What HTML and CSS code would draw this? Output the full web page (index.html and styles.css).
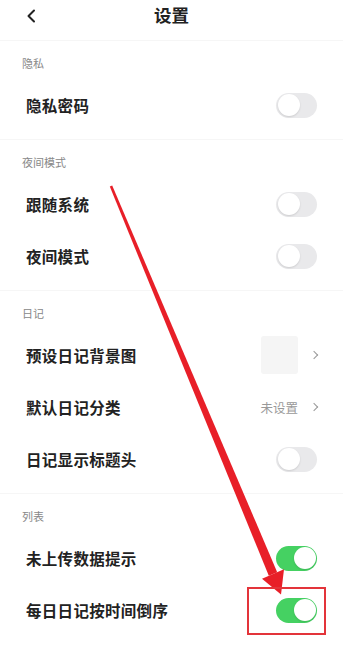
FILE: index.html
```html
<!DOCTYPE html>
<html lang="zh">
<head>
<meta charset="utf-8">
<link rel="stylesheet" href="styles.css">
</head>
<body>
<div class="page">
  <header class="header">
    <svg class="back" width="10" height="14" viewBox="0 0 10 14"><path d="M8 1.5 L2.5 7 L8 12.5" fill="none" stroke="#222" stroke-width="2" stroke-linecap="round" stroke-linejoin="round"/></svg>
    <h1 class="title">设置</h1>
  </header>

  <section class="section">
    <div class="label">隐私</div>
    <div class="row"><span class="name">隐私密码</span><span class="toggle"></span></div>
  </section>

  <section class="section">
    <div class="label">夜间模式</div>
    <div class="row"><span class="name">跟随系统</span><span class="toggle"></span></div>
    <div class="row"><span class="name">夜间模式</span><span class="toggle"></span></div>
  </section>

  <section class="section">
    <div class="label">日记</div>
    <div class="row"><span class="name">预设日记背景图</span><span class="value"><span class="thumb"></span><span class="chev"></span></span></div>
    <div class="row"><span class="name">默认日记分类</span><span class="value"><span class="muted">未设置</span><span class="chev"></span></span></div>
    <div class="row"><span class="name">日记显示标题头</span><span class="toggle"></span></div>
  </section>

  <section class="section">
    <div class="label">列表</div>
    <div class="row"><span class="name">未上传数据提示</span><span class="toggle on"></span></div>
    <div class="row"><span class="name">每日日记按时间倒序</span><span class="toggle on"></span></div>
  </section>

  <svg class="annot" width="343" height="647" viewBox="0 0 343 647">
    <polygon points="112.2,185.5 277.2,572.2 268.8,575.8 109.8,186.5" fill="#e81f28"/>
    <polygon points="284,569.3 281,594.5 262,578.7" fill="#e81f28"/>
    <rect x="248" y="588" width="77" height="46" fill="none" stroke="#e3343a" stroke-width="2"/>
  </svg>
</div>
</body>
</html>
```

FILE: styles.css
```css
* { box-sizing: border-box; }
html, body { margin: 0; padding: 0; background: #fff; }
body {
  font-family: "Noto Sans CJK SC", "Noto Sans", sans-serif;
  color: #222;
}
.page {
  position: relative;
  width: 343px;
  height: 647px;
  overflow: hidden;
}
.header {
  height: 40px;
  display: flex;
  align-items: center;
  justify-content: center;
  position: relative;
}
.back {
  position: absolute;
  left: 26px;
  top: 9px;
}
.title {
  margin: 0;
  font-size: 17.5px;
  font-weight: 700;
  line-height: 20px;
  margin-top: -10px;
}
.section {
  border-top: 1px solid #f6f6f6;
  padding-bottom: 8px;
}
.label {
  height: 38px;
  padding: 14px 0 0 22px;
  font-size: 11px;
  line-height: 16px;
  color: #888;
}
.row {
  height: 52px;
  display: flex;
  align-items: center;
  justify-content: space-between;
  padding: 0 26px 0 26px;
}
.name {
  font-size: 15.5px;
  font-weight: 700;
  letter-spacing: 0.3px;
  color: #222;
}
.toggle {
  width: 41px;
  height: 25px;
  border-radius: 13px;
  background: #e9e9eb;
  position: relative;
}
.toggle::after {
  content: "";
  position: absolute;
  left: 1.5px;
  top: 1.5px;
  width: 22px;
  height: 22px;
  border-radius: 50%;
  background: #fff;
  box-shadow: 0 1px 2px rgba(0,0,0,0.12);
}
.toggle.on { background: #45d162; }
.toggle.on::after { left: auto; right: 1.5px; }
.value {
  display: flex;
  align-items: center;
  gap: 13px;
  margin-right: -2px;
}
.thumb {
  width: 37px;
  height: 38px;
  border-radius: 3px;
  background: #f5f5f5;
}
.muted {
  font-size: 12.5px;
  color: #999;
}
.chev {
  width: 6px;
  height: 6px;
  border-right: 1.5px solid #999;
  border-top: 1.5px solid #999;
  transform: rotate(45deg);
  margin-right: 2px;
}
.annot {
  position: absolute;
  left: 0;
  top: 0;
  pointer-events: none;
}
```
